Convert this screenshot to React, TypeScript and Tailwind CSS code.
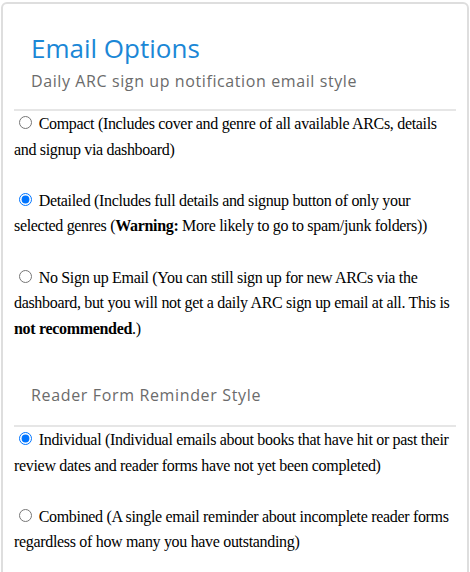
import { useState } from 'react';

const headingFont = { fontFamily: '"Open Sans", "Liberation Sans", sans-serif' };

interface OptionProps {
  name: string;
  value: string;
  checked: boolean;
  onChange: (v: string) => void;
  children: React.ReactNode;
}

function RadioOption({ name, value, checked, onChange, children }: OptionProps) {
  return (
    <p className="mb-[25.6px] text-[16px] leading-[25.6px] tracking-[-0.32px] text-black">
      <input
        type="radio"
        name={name}
        value={value}
        checked={checked}
        onChange={() => onChange(value)}
        className="ml-[5px] mr-[3px] mt-[3px]"
      />{' '}
      {children}
    </p>
  );
}

export default function App() {
  const [signupStyle, setSignupStyle] = useState('detailed');
  const [reminderStyle, setReminderStyle] = useState('individual');

  return (
    <div
      className="bg-white pt-[2px] px-[1px] min-h-screen"
      style={{ fontFamily: '"Liberation Serif", "Times New Roman", serif' }}
    >
      <div className="border-2 border-[#dedede] rounded-md px-[11px] pb-10">
        {/* Daily signup email */}
        <div className="pt-[28px] pb-4 px-[17px]" style={headingFont}>
          <h3 className="text-[26px] leading-[32px] font-medium text-[#1b87d6]">Email Options</h3>
          <p className="mt-[5px] text-[16px] leading-[24px] tracking-[0.6px] text-[#6b6b6b]">
            Daily ARC sign up notification email style
          </p>
        </div>
        <div className="h-[2px] bg-[#e6e6e6]" />

        <RadioOption name="signup" value="compact" checked={signupStyle === 'compact'} onChange={setSignupStyle}>
          Compact (Includes cover and genre of all available ARCs, details and signup via dashboard)
        </RadioOption>
        <RadioOption name="signup" value="detailed" checked={signupStyle === 'detailed'} onChange={setSignupStyle}>
          Detailed (Includes full details and signup button of only your selected genres (<strong>Warning:</strong> More
          likely to go to spam/junk folders))
        </RadioOption>
        <RadioOption name="signup" value="none" checked={signupStyle === 'none'} onChange={setSignupStyle}>
          No Sign up Email (You can still sign up for new ARCs via the dashboard, but you will not get a daily ARC sign
          up email at all. This is <strong>not recommended</strong>.)
        </RadioOption>

        {/* Reader form reminders */}
        <div className="pt-4 pb-[18px] px-[17px]" style={headingFont}>
          <p className="text-[16px] leading-[24px] tracking-[0.65px] text-[#6b6b6b]">Reader Form Reminder Style</p>
        </div>
        <div className="h-[2px] bg-[#e6e6e6]" />

        <RadioOption
          name="reminder"
          value="individual"
          checked={reminderStyle === 'individual'}
          onChange={setReminderStyle}
        >
          Individual (Individual emails about books that have hit or past their review dates and reader forms have not
          yet been completed)
        </RadioOption>
        <RadioOption
          name="reminder"
          value="combined"
          checked={reminderStyle === 'combined'}
          onChange={setReminderStyle}
        >
          Combined (A single email reminder about incomplete reader forms regardless of how many you have outstanding)
        </RadioOption>
      </div>
    </div>
  );
}
